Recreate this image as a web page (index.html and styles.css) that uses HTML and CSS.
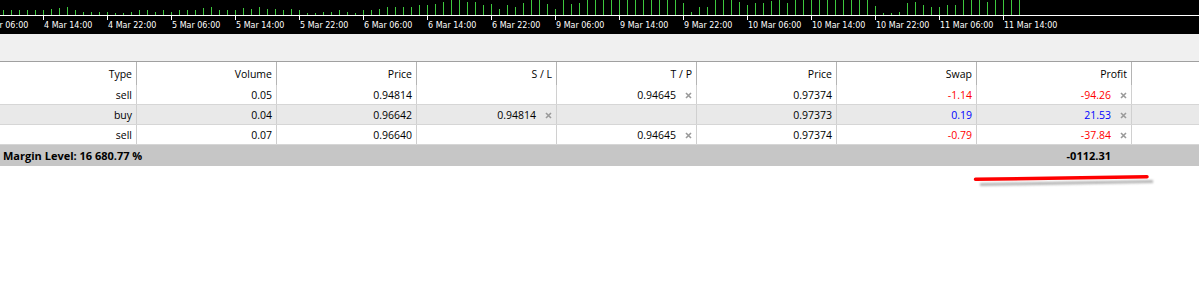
FILE: index.html
```html
<!DOCTYPE html>
<html>
<head>
<meta charset="utf-8">
<link rel="stylesheet" href="styles.css">
</head>
<body>
<div class="page">
  <div class="chart">
    <svg class="chart-svg" width="1199" height="34" viewBox="0 0 1199 34">
      <path class="bars" d="M3.5 10V15M11.5 10V15M19.5 10V15M27.5 10V15M35.5 10V15M43.5 10V15M51.5 9V15M59.5 8V15M67.5 7V15M75.5 10V15M83.5 12V15M91.5 12V15M99.5 12V15M107.5 12V15M115.5 13V15M123.5 13V15M131.5 12V15M139.5 10V15M147.5 10V15M155.5 12V15M163.5 10V15M171.5 12V15M179.5 10V15M187.5 10V15M195.5 10V15M203.5 8V15M211.5 7V15M219.5 10V15M227.5 10V15M235.5 10V15M243.5 8V15M251.5 9V15M259.5 7V15M267.5 9V15M275.5 9V15M283.5 10V15M291.5 9V15M299.5 10V15M307.5 13V15M315.5 13V15M323.5 12V15M331.5 12V15M339.5 10V15M347.5 12V15M355.5 13V15M363.5 10V15M371.5 10V15M379.5 9V15M387.5 7V15M395.5 7V15M403.5 7V15M411.5 7V15M419.5 5V15M427.5 5V15M435.5 4V15M443.5 2V15M451.5 0V15M459.5 0V15M467.5 2V15M475.5 2V15M483.5 5V15M491.5 4V15M499.5 9V15M507.5 5V15M515.5 7V15M523.5 3V15M531.5 0V15M539.5 0V15M547.5 4V15M555.5 9V15M563.5 0V15M571.5 4V15M579.5 3V15M587.5 0V15M595.5 0V15M603.5 0V15M611.5 0V15M619.5 0V15M627.5 0V15M635.5 0V15M643.5 0V15M651.5 0V15M659.5 0V15M667.5 0V15M675.5 0V15M683.5 3V15M691.5 12V15M699.5 7V15M707.5 7V15M715.5 0V15M723.5 0V15M731.5 0V15M739.5 2V15M747.5 5V15M755.5 3V15M763.5 3V15M771.5 1V15M779.5 0V15M787.5 3V15M795.5 0V15M803.5 0V15M811.5 0V15M819.5 0V15M827.5 0V15M835.5 0V15M843.5 0V15M851.5 0V15M859.5 0V15M867.5 0V15M875.5 6V15M883.5 13V15M891.5 13V15M899.5 12V15M907.5 3V15M915.5 2V15M923.5 5V15M931.5 7V15M939.5 7V15M947.5 5V15M955.5 5V15M963.5 0V15M971.5 0V15M979.5 0V15M987.5 2V15M995.5 0V15M1003.5 0V15M1011.5 0V15M1019.5 0V15"/>
      <path class="axis" d="M0 15.5H1199M43.5 15V20M107.5 15V20M171.5 15V20M235.5 15V20M299.5 15V20M363.5 15V20M427.5 15V20M491.5 15V20M555.5 15V20M619.5 15V20M683.5 15V20M747.5 15V20M811.5 15V20M875.5 15V20M939.5 15V20M1003.5 15V20"/>
      <text class="axis-label" x="-20" y="28">4 Mar 06:00</text>
      <text class="axis-label" x="44" y="28">4 Mar 14:00</text>
      <text class="axis-label" x="108" y="28">4 Mar 22:00</text>
      <text class="axis-label" x="172" y="28">5 Mar 06:00</text>
      <text class="axis-label" x="236" y="28">5 Mar 14:00</text>
      <text class="axis-label" x="300" y="28">5 Mar 22:00</text>
      <text class="axis-label" x="364" y="28">6 Mar 06:00</text>
      <text class="axis-label" x="428" y="28">6 Mar 14:00</text>
      <text class="axis-label" x="492" y="28">6 Mar 22:00</text>
      <text class="axis-label" x="556" y="28">9 Mar 06:00</text>
      <text class="axis-label" x="620" y="28">9 Mar 14:00</text>
      <text class="axis-label" x="684" y="28">9 Mar 22:00</text>
      <text class="axis-label" x="748" y="28">10 Mar 06:00</text>
      <text class="axis-label" x="812" y="28">10 Mar 14:00</text>
      <text class="axis-label" x="876" y="28">10 Mar 22:00</text>
      <text class="axis-label" x="940" y="28">11 Mar 06:00</text>
      <text class="axis-label" x="1004" y="28">11 Mar 14:00</text>
    </svg>
  </div>
  <div class="band"></div>
  <div class="table">
    <div class="row head">
      <div class="cell">Type</div>
      <div class="cell">Volume</div>
      <div class="cell">Price</div>
      <div class="cell">S / L</div>
      <div class="cell">T / P</div>
      <div class="cell">Price</div>
      <div class="cell">Swap</div>
      <div class="cell">Profit</div>
      <div class="cell last"></div>
    </div>
    <div class="row">
      <div class="cell">sell</div>
      <div class="cell">0.05</div>
      <div class="cell">0.94814</div>
      <div class="cell"></div>
      <div class="cell">0.94645<svg class="x" viewBox="0 0 7 7"><path d="M1 1L6 6M6 1L1 6"/></svg></div>
      <div class="cell">0.97374</div>
      <div class="cell neg">-1.14</div>
      <div class="cell neg">-94.26<svg class="x" viewBox="0 0 7 7"><path d="M1 1L6 6M6 1L1 6"/></svg></div>
      <div class="cell last"></div>
    </div>
    <div class="row alt">
      <div class="cell">buy</div>
      <div class="cell">0.04</div>
      <div class="cell">0.96642</div>
      <div class="cell">0.94814<svg class="x" viewBox="0 0 7 7"><path d="M1 1L6 6M6 1L1 6"/></svg></div>
      <div class="cell"></div>
      <div class="cell">0.97373</div>
      <div class="cell pos">0.19</div>
      <div class="cell pos">21.53<svg class="x" viewBox="0 0 7 7"><path d="M1 1L6 6M6 1L1 6"/></svg></div>
      <div class="cell last"></div>
    </div>
    <div class="row">
      <div class="cell">sell</div>
      <div class="cell">0.07</div>
      <div class="cell">0.96640</div>
      <div class="cell"></div>
      <div class="cell">0.94645<svg class="x" viewBox="0 0 7 7"><path d="M1 1L6 6M6 1L1 6"/></svg></div>
      <div class="cell">0.97374</div>
      <div class="cell neg">-0.79</div>
      <div class="cell neg">-37.84<svg class="x" viewBox="0 0 7 7"><path d="M1 1L6 6M6 1L1 6"/></svg></div>
      <div class="cell last"></div>
    </div>
    <div class="row total">
      <div class="summary">Margin Level: 16 680.77 %</div>
      <div class="sum">-0112.31</div>
      <div></div>
    </div>
  </div>
  <svg class="mark" width="200" height="24" viewBox="0 0 200 24">
    <defs>
      <filter id="blur" x="-10%" y="-100%" width="120%" height="300%">
        <feGaussianBlur stdDeviation="1.3"/>
      </filter>
    </defs>
    <path class="mark-shadow" d="M10 14.5L183 11.5" filter="url(#blur)"/>
    <path class="mark-line" d="M5.5 9.3L177 6.7"/>
  </svg>
</div>
</body>
</html>
```

FILE: styles.css
```css
html, body {
  margin: 0;
  padding: 0;
  background: #ffffff;
}
.page {
  position: relative;
  width: 1199px;
  height: 294px;
  overflow: hidden;
  background: #ffffff;
  font-family: "Open Sans", "Noto Sans", sans-serif;
  font-size: 10.5px;
  color: #000000;
}
.chart {
  height: 34px;
  background: #000000;
}
.chart-svg {
  display: block;
}
.bars {
  stroke: #3dc83d;
  stroke-width: 1;
  fill: none;
}
.axis {
  stroke: #ffffff;
  stroke-width: 1;
  fill: none;
}
.axis-label {
  font-family: "DejaVu Sans", sans-serif;
  font-size: 8px;
  fill: #ffffff;
}
.band {
  height: 27px;
  background: #f0f0f0;
}
.table {
  border-top: 1px solid #a0a0a0;
}
.row {
  display: grid;
  grid-template-columns: 137px 140px 140px 140px 140px 140px 140px 155px 1fr;
  height: 20px;
  box-sizing: border-box;
  border-bottom: 1px solid #d6d6d6;
  background: #ffffff;
}
.row.head {
  height: 23px;
  border-bottom: none;
}
.row.alt {
  background: #e9e9e9;
}
.cell {
  display: flex;
  align-items: center;
  justify-content: flex-end;
  gap: 9px;
  padding-top: 2px;
  padding-right: 4px;
  border-right: 1px solid #d0d0d0;
  box-sizing: border-box;
  white-space: nowrap;
  line-height: 1;
}
.head .cell {
  padding-top: 1px;
  border-right-color: #b4b4b4;
}
.cell.last {
  border-right: none;
}
.neg {
  color: #ff0000;
}
.pos {
  color: #0000ff;
}
.x {
  width: 7px;
  height: 7px;
  flex: none;
}
.x path {
  stroke: #9a9a9a;
  stroke-width: 1.6;
  fill: none;
}
.row.total {
  height: 21px;
  border-bottom: none;
  background: #c6c6c6;
  grid-template-columns: 977px 155px 1fr;
  font-weight: 700;
  font-size: 11px;
  align-items: center;
}
.summary {
  padding-left: 3px;
  white-space: nowrap;
}
.sum {
  text-align: right;
  padding-right: 21px;
}
.mark {
  position: absolute;
  left: 970px;
  top: 170px;
}
.mark-line {
  stroke: #ff0000;
  stroke-width: 3.5;
  stroke-linecap: round;
  fill: none;
}
.mark-shadow {
  stroke: #7a7a7a;
  stroke-width: 3;
  opacity: 0.55;
  fill: none;
}
```
